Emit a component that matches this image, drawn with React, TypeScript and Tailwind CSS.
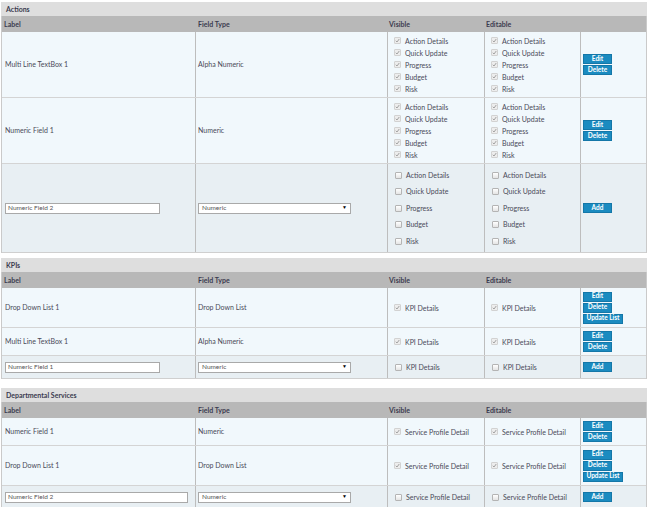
import React from 'react'

type Row = {
  label: string
  type: string
  items: string[]
  buttons: string[]
  h: string
}

type Section = {
  title: string
  rows: Row[]
  addLabel: string
  addItems: string[]
  addH: string
  addGap: string
  inputW: string
}

const sections: Section[] = [
  {
    title: 'Actions',
    rows: [
      { label: 'Multi Line TextBox 1', type: 'Alpha Numeric', items: ['Action Details', 'Quick Update', 'Progress', 'Budget', 'Risk'], buttons: ['Edit', 'Delete'], h: 'h-[66px]' },
      { label: 'Numeric Field 1', type: 'Numeric', items: ['Action Details', 'Quick Update', 'Progress', 'Budget', 'Risk'], buttons: ['Edit', 'Delete'], h: 'h-[66px]' },
    ],
    addLabel: 'Numeric Field 2',
    addItems: ['Action Details', 'Quick Update', 'Progress', 'Budget', 'Risk'],
    addH: 'h-[89px]',
    addGap: 'leading-[16.5px]',
    inputW: 'w-[155px]',
  },
  {
    title: 'KPIs',
    rows: [
      { label: 'Drop Down List 1', type: 'Drop Down List', items: ['KPI Details'], buttons: ['Edit', 'Delete', 'Update List'], h: 'h-[40px]' },
      { label: 'Multi Line TextBox 1', type: 'Alpha Numeric', items: ['KPI Details'], buttons: ['Edit', 'Delete'], h: 'h-[28px]' },
    ],
    addLabel: 'Numeric Field 1',
    addItems: ['KPI Details'],
    addH: 'h-[23px]',
    addGap: 'leading-[12px]',
    inputW: 'w-[155px]',
  },
  {
    title: 'Departmental Services',
    rows: [
      { label: 'Numeric Field 1', type: 'Numeric', items: ['Service Profile Detail'], buttons: ['Edit', 'Delete'], h: 'h-[28px]' },
      { label: 'Drop Down List 1', type: 'Drop Down List', items: ['Service Profile Detail'], buttons: ['Edit', 'Delete', 'Update List'], h: 'h-[40px]' },
    ],
    addLabel: 'Numeric Field 2',
    addItems: ['Service Profile Detail'],
    addH: 'h-[23px]',
    addGap: 'leading-[12px]',
    inputW: 'w-[183px]',
  },
]

const grid = 'grid grid-cols-[194px_192px_97px_96px_1fr]'
const cell = 'border-r border-[#bdbdbd] flex items-center'

function Box({ checked }: { checked: boolean }) {
  if (checked) {
    return (
      <span className="w-[7px] h-[7px] rounded-[1px] border border-[#d2d2d2] bg-[#ededed] flex items-center justify-center shrink-0">
        <svg width="5" height="5" viewBox="0 0 10 10">
          <path d="M1.5 5.5 L4 8 L8.5 2" fill="none" stroke="#9a9a9a" strokeWidth="1.8" />
        </svg>
      </span>
    )
  }
  return <span className="w-[7px] h-[7px] rounded-[1px] border border-[#b4b4b4] bg-gradient-to-b from-white to-[#e4e4e4] shrink-0" />
}

function Checks({ items, checked, lh }: { items: string[]; checked: boolean; lh: string }) {
  return (
    <div className={`flex flex-col ${lh}`}>
      {items.map(t => (
        <div key={t} className="flex items-center gap-[4px]">
          <Box checked={checked} />
          <span>{t}</span>
        </div>
      ))}
    </div>
  )
}

function Btn({ text }: { text: string }) {
  return (
    <span className={`h-[10px] px-[2px] flex items-center justify-center bg-[#1b8bc0] border border-[#1477a8] text-white font-bold text-[6.5px] leading-none ${text === 'Update List' ? 'w-[40px]' : 'w-[29px]'}`}>
      {text}
    </span>
  )
}

function Block({ s, mt }: { s: Section; mt: string }) {
  return (
    <div className={`${mt} ml-[1px] w-[646px]`}>
      <div className="h-[14px] bg-[#dedede] px-[5px] flex items-center font-bold text-[#3b3b4f]">{s.title}</div>
      <div className="border-l border-r border-[#cacaca]">
        <div className={`${grid} h-[16px] bg-[#b8b8b8] font-bold text-[#3b3b4f]`}>
          <div className="flex items-center px-[2px]">Label</div>
          <div className="flex items-center px-[2px]">Field Type</div>
          <div className="flex items-center px-[1px]">Visible</div>
          <div className="flex items-center px-[1px]">Editable</div>
          <div />
        </div>
        {s.rows.map(r => (
          <div key={r.label} className={`${grid} ${r.h} bg-[#f1f8fc] border-b border-[#d4d4d4]`}>
            <div className={`${cell} px-[3px]`}>{r.label}</div>
            <div className={`${cell} px-[2px]`}>{r.type}</div>
            <div className={`${cell} pl-[6px]`}>
              <Checks items={r.items} checked lh="leading-[12px]" />
            </div>
            <div className={`${cell} pl-[6px]`}>
              <Checks items={r.items} checked lh="leading-[12px]" />
            </div>
            <div className="flex flex-col justify-center gap-[1px] pl-[2px]">
              {r.buttons.map(b => <Btn key={b} text={b} />)}
            </div>
          </div>
        ))}
        <div className={`${grid} ${s.addH} bg-[#e8eff3] border-b border-[#cfcfcf]`}>
          <div className={`${cell} px-[3px]`}>
            <div className={`${s.inputW} h-[11px] bg-white border border-[#a9a9a9] px-[2px] flex items-center text-[6.5px] text-[#555]`}>{s.addLabel}</div>
          </div>
          <div className={`${cell} px-[2px]`}>
            <div className="w-[153px] h-[11px] bg-white border border-[#a9a9a9] px-[3px] flex items-center justify-between text-[6.5px] text-[#555]">
              <span>Numeric</span>
              <span className="text-[5px] text-black">▼</span>
            </div>
          </div>
          <div className={`${cell} pl-[7px]`}>
            <Checks items={s.addItems} checked={false} lh={s.addGap} />
          </div>
          <div className={`${cell} pl-[7px]`}>
            <Checks items={s.addItems} checked={false} lh={s.addGap} />
          </div>
          <div className="flex items-center pl-[2px]">
            <Btn text="Add" />
          </div>
        </div>
      </div>
    </div>
  )
}

export default function App() {
  return (
    <div className="w-[650px] h-[507px] overflow-hidden bg-white pt-[2px] text-[7px] text-[#4a4a58] font-[Lato,'Open_Sans',sans-serif]">
      <Block s={sections[0]} mt="" />
      <Block s={sections[1]} mt="mt-[5px]" />
      <Block s={sections[2]} mt="mt-[9px]" />
    </div>
  )
}
